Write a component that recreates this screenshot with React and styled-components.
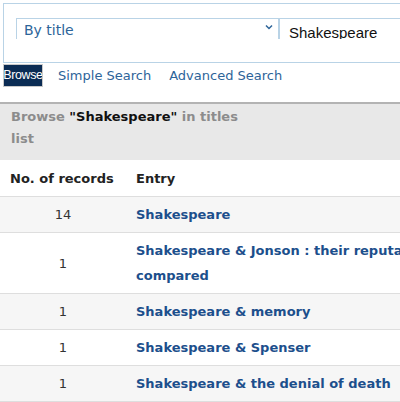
import React from 'react';
import styled, { createGlobalStyle } from 'styled-components';

const GlobalStyle = createGlobalStyle`
  body {
    margin: 0;
    background: #fff;
    font-family: "DejaVu Sans", Verdana, sans-serif;
  }
`;

const Page = styled.div`
  width: 400px;
  height: 402px;
  overflow: hidden;
`;

const SearchPanel = styled.div`
  margin: 3px 0 0 3px;
  width: 420px;
  height: 60px;
  border: 1px solid #b9d3e6;
  box-sizing: border-box;
  padding: 14px 0 0 12px;
  display: flex;
`;

const SelectBox = styled.div`
  width: 263px;
  height: 21px;
  box-sizing: border-box;
  border: 1px solid #b9d3e6;
  border-bottom: none;
  display: flex;
  align-items: center;
  justify-content: space-between;
  padding: 1px 5px 0 7px;
  color: #2d6499;
  font-size: 14px;
`;

const SearchInput = styled.div`
  flex: 1;
  height: 21px;
  box-sizing: border-box;
  border: 1px solid #b9d3e6;
  border-bottom: none;
  border-right: none;
  padding: 6px 0 0 9px;
  font-family: "Liberation Sans", Arial, sans-serif;
  font-size: 15px;
  line-height: 16px;
  color: #111;
  overflow: hidden;
`;

const Tabs = styled.div`
  display: flex;
  align-items: center;
  height: 24px;
  margin: 0 0 0 3px;
  gap: 15px;
`;

const Tab = styled.a`
  font-size: 13px;
  color: #2d6499;
  text-decoration: none;
  cursor: pointer;
  &:last-child {
    margin-left: 3px;
  }
`;

const ActiveTab = styled.span`
  display: inline-flex;
  align-items: center;
  justify-content: center;
  height: 23px;
  width: 40px;
  box-sizing: border-box;
  border: 1px solid #c9c9c9;
  background: #0b2c54;
  color: #fff;
  font-family: "Liberation Sans", Arial, sans-serif;
  font-size: 12.5px;
  letter-spacing: -0.4px;
  white-space: nowrap;
  overflow: hidden;
`;

const Heading = styled.div`
  margin-top: 15px;
  border-top: 2px solid #b3b3b3;
  background: #e8e8e8;
  padding: 2px 11px 10px;
  font-size: 13px;
  font-weight: bold;
  line-height: 22px;
  color: #8c8c8c;
  & > span {
    display: block;
    max-width: 245px;
  }
  & b {
    color: #111;
  }
`;

const Table = styled.table`
  border-collapse: collapse;
  width: 560px;
  font-size: 13px;
`;

const HeadCell = styled.th`
  text-align: left;
  font-weight: bold;
  color: #222;
  height: 36px;
  padding: 0 10px;
  border-bottom: 1px solid #dedede;
  width: ${p => (p.$narrow ? '106px' : 'auto')};
`;

const Row = styled.tr`
  background: ${p => (p.$odd ? '#f6f6f6' : '#fff')};
  border-bottom: 1px solid #dedede;
`;

const CountCell = styled.td`
  text-align: center;
  color: #333;
  padding: 5px 0;
  line-height: 25px;
`;

const EntryCell = styled.td`
  padding: 5px 10px;
  line-height: 25px;
  vertical-align: middle;
  white-space: nowrap;
`;

const EntryLink = styled.a`
  color: #1c4f8c;
  font-weight: bold;
  text-decoration: none;
`;

const rows = [
  { count: 14, lines: ['Shakespeare'] },
  { count: 1, lines: ['Shakespeare & Jonson : their reputations', 'compared'] },
  { count: 1, lines: ['Shakespeare & memory'] },
  { count: 1, lines: ['Shakespeare & Spenser'] },
  { count: 1, lines: ['Shakespeare & the denial of death'] },
];

export default function App() {
  return (
    <Page>
      <GlobalStyle />
      <SearchPanel>
        <SelectBox>
          <span>By title</span>
          <svg width="8" height="6" viewBox="0 0 8 6" style={{ marginTop: -6 }}>
            <path d="M1 1.5 L4 4.5 L7 1.5" fill="none" stroke="#2d6499" strokeWidth="1.5" />
          </svg>
        </SelectBox>
        <SearchInput>Shakespeare</SearchInput>
      </SearchPanel>
      <Tabs>
        <ActiveTab>Browse</ActiveTab>
        <Tab>Simple Search</Tab>
        <Tab>Advanced Search</Tab>
      </Tabs>
      <Heading>
        <span>
          Browse <b>"Shakespeare"</b> in titles list
        </span>
      </Heading>
      <Table>
        <thead>
          <tr>
            <HeadCell $narrow>No. of records</HeadCell>
            <HeadCell>Entry</HeadCell>
          </tr>
        </thead>
        <tbody>
          {rows.map((r, i) => (
            <Row key={i} $odd={i % 2 === 0}>
              <CountCell>{r.count}</CountCell>
              <EntryCell>
                <EntryLink>
                  {r.lines.map((l, j) => (
                    <React.Fragment key={j}>
                      {j > 0 && <br />}
                      {l}
                    </React.Fragment>
                  ))}
                </EntryLink>
              </EntryCell>
            </Row>
          ))}
        </tbody>
      </Table>
    </Page>
  );
}
